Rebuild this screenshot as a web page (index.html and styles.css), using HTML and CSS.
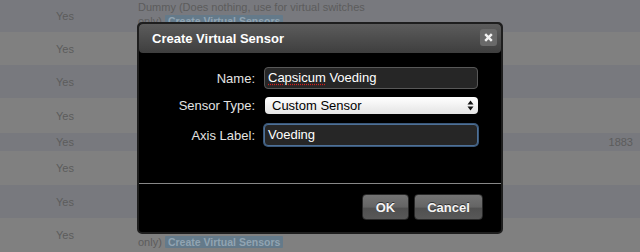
FILE: index.html
```html
<!DOCTYPE html>
<html lang="en">

<head>
    <meta charset="UTF-8">
    <title>Create Virtual Sensor</title>
    <link rel="stylesheet" href="styles.css">
</head>

<body>
    <div class="table">
        <div class="row alt top">
            <div class="cell used">Yes</div>
            <div class="cell desc">Dummy (Does nothing, use for virtual switches<br>only) <span class="badge">Create Virtual Sensors</span></div>
            <div class="cell num"></div>
        </div>
        <div class="row h33">
            <div class="cell used">Yes</div>
            <div class="cell desc"></div>
            <div class="cell num"></div>
        </div>
        <div class="row alt h33">
            <div class="cell used">Yes</div>
            <div class="cell desc"></div>
            <div class="cell num"></div>
        </div>
        <div class="row h35">
            <div class="cell used">Yes</div>
            <div class="cell desc"></div>
            <div class="cell num"></div>
        </div>
        <div class="row alt h18">
            <div class="cell used">Yes</div>
            <div class="cell desc"></div>
            <div class="cell num">1883</div>
        </div>
        <div class="row h34">
            <div class="cell used">Yes</div>
            <div class="cell desc"></div>
            <div class="cell num"></div>
        </div>
        <div class="row alt h33">
            <div class="cell used">Yes</div>
            <div class="cell desc"></div>
            <div class="cell num"></div>
        </div>
        <div class="row h34">
            <div class="cell used">Yes</div>
            <div class="cell desc">Dummy (Does nothing, use for virtual switches<br>only) <span class="badge">Create Virtual Sensors</span></div>
            <div class="cell num"></div>
        </div>
    </div>

    <div class="dialog">
        <div class="titlebar">
            <span class="title">Create Virtual Sensor</span>
            <span class="close">
                <svg width="9" height="9" viewBox="0 0 9 9">
                    <path d="M1.2 1.2 L7.8 7.8 M7.8 1.2 L1.2 7.8" stroke="#f2f2f2" stroke-width="2.4"/>
                </svg>
            </span>
        </div>
        <div class="dialog-body">
            <div class="form-row">
                <label>Name:</label>
                <div class="field"><span class="typo">Capsicum</span> Voeding</div>
            </div>
            <div class="form-row">
                <label>Sensor Type:</label>
                <div class="select">
                    <span>Custom Sensor</span>
                    <svg width="7" height="11" viewBox="0 0 7 11">
                        <path d="M3.5 0.5 L6.5 4.5 L0.5 4.5 Z M3.5 10.5 L6.5 6.5 L0.5 6.5 Z" fill="#111"/>
                    </svg>
                </div>
            </div>
            <div class="form-row axis">
                <label>Axis Label:</label>
                <div class="field focus">Voeding</div>
            </div>
        </div>
        <div class="dialog-footer">
            <button>OK</button>
            <button class="wide">Cancel</button>
        </div>
    </div>
</body>

</html>
```

FILE: styles.css
```css
body {
    margin: 0;
    font-family: "Liberation Sans", Arial, Helvetica, sans-serif;
    font-size: 11px;
    background-color: rgb(128, 128, 128);
    color: rgb(92, 92, 92);
}

.table {
    width: 640px;
    height: 252px;
    overflow: hidden;
}

.row {
    display: grid;
    grid-template-columns: 130px 1fr 60px;
    align-items: center;
    background-color: rgb(128, 128, 128);
}

.row.alt {
    background-color: rgb(120, 121, 126);
}

.row.top {
    height: 32px;
}

.row.top .desc {
    align-self: start;
}

.h18 { height: 18px; }
.h33 { height: 33px; }
.h34 { height: 34px; }
.h35 { height: 35px; }

.cell {
    line-height: 14px;
}

.used {
    text-align: center;
}

.desc {
    padding-left: 8px;
    white-space: nowrap;
}

.num {
    text-align: right;
    padding-right: 7px;
}

.badge {
    display: inline-block;
    background-color: rgb(100, 122, 138);
    color: rgb(145, 164, 178);
    font-weight: bold;
    font-size: 10.5px;
    line-height: 12px;
    padding: 0 3px;
    border-radius: 1px;
}

/* dialog */
.dialog {
    position: absolute;
    left: 137px;
    top: 22px;
    width: 366px;
    height: 212px;
    box-sizing: border-box;
    border: 2px solid rgb(30, 30, 30);
    border-radius: 5px;
    background-color: rgb(0, 0, 0);
    display: flex;
    flex-direction: column;
}

.titlebar {
    height: 29px;
    display: flex;
    align-items: center;
    justify-content: space-between;
    padding: 0 4px 0 13px;
    border-radius: 4px;
    background: linear-gradient(rgb(92, 92, 92), rgb(62, 62, 62));
}

.title {
    color: rgb(255, 255, 255);
    font-size: 13px;
    font-weight: bold;
}

.close {
    width: 17px;
    height: 17px;
    border-radius: 3px;
    background-color: rgb(105, 105, 105);
    display: flex;
    align-items: center;
    justify-content: center;
    margin-top: -2px;
}

.dialog-body {
    height: 130px;
    box-sizing: border-box;
    padding-top: 14px;
    display: flex;
    flex-direction: column;
    gap: 8px;
}

.form-row {
    display: grid;
    grid-template-columns: 116px 214px;
    column-gap: 9px;
    align-items: center;
}

.form-row.axis {
    margin-top: 2px;
}

label {
    text-align: right;
    color: rgb(228, 228, 228);
    font-size: 13px;
}

.field {
    height: 22px;
    box-sizing: border-box;
    border: 1px solid rgb(88, 88, 88);
    border-radius: 4px;
    background-color: rgb(38, 38, 38);
    color: rgb(255, 255, 255);
    font-size: 13px;
    line-height: 20px;
    padding-left: 3px;
}

.field.focus {
    border-color: rgb(78, 112, 150);
    box-shadow: 0 0 0 1px rgb(58, 88, 122);
}

.typo {
    text-decoration: underline dotted rgb(210, 30, 30);
    text-underline-offset: 2px;
}

.select {
    height: 17px;
    margin-left: 1px;
    display: flex;
    align-items: center;
    justify-content: space-between;
    padding: 0 4px 0 7px;
    border-radius: 4px;
    background: linear-gradient(rgb(255, 255, 255), rgb(228, 228, 228));
    color: rgb(0, 0, 0);
    font-size: 13px;
}

.dialog-footer {
    flex: 1;
    border-top: 1px solid rgb(136, 136, 136);
    display: flex;
    justify-content: flex-end;
    align-items: flex-start;
    gap: 5px;
    padding: 10px 18px 0 0;
}

button {
    width: 47px;
    height: 26px;
    border: 1px solid rgb(40, 40, 40);
    border-radius: 4px;
    background: linear-gradient(rgb(116, 116, 116) 0%, rgb(100, 100, 100) 50%, rgb(80, 80, 80) 55%, rgb(88, 88, 88) 100%);
    color: rgb(245, 245, 245);
    font-family: "Liberation Sans", Arial, Helvetica, sans-serif;
    font-size: 13px;
    font-weight: bold;
    text-shadow: 0 -1px 0 rgb(50, 50, 50);
    padding: 0;
}

button.wide {
    width: 69px;
}
```
